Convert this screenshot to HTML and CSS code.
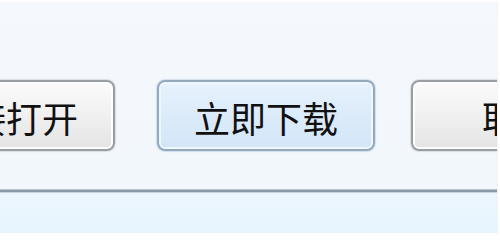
FILE: index.html
```html
<!DOCTYPE html>
<html lang="zh-CN">
<head>
<meta charset="utf-8">
<link rel="stylesheet" href="styles.css">
</head>
<body>
<div class="frame">
  <div class="main">
    <div class="buttons">
      <button class="btn btn-open">直接打开</button>
      <button class="btn btn-primary">立即下载</button>
      <button class="btn btn-cancel">取消</button>
    </div>
  </div>
  <div class="separator"></div>
  <div class="footer"></div>
</div>
</body>
</html>
```
FILE: styles.css
```css
html, body {
  margin: 0;
  padding: 0;
  width: 500px;
  height: 235px;
  overflow: hidden;
  background: #ffffff;
}
.frame {
  width: 497px;
  height: 233px;
  border-top: 2px solid #ffffff;
  border-right: 1px solid #f0f4f8;
  display: flex;
  flex-direction: column;
  background: #f3f8fd;
  overflow: hidden;
}
.main {
  height: 187px;
  background: linear-gradient(#f5f9fd, #f2f7fc);
}
.buttons {
  display: flex;
  column-gap: 36px;
  padding-top: 78px;
}
.btn {
  flex: none;
  width: 218px;
  height: 71px;
  box-sizing: border-box;
  border: 2px solid #9a9ea3;
  border-radius: 8px;
  box-shadow: inset 0 0 0 2px #fdfdfd, 0 0 1px 1px rgba(200, 206, 214, 0.6);
  background: linear-gradient(#fbfbfb 0%, #f1f1f1 45%, #e4e4e4 100%);
  font-family: "Noto Sans CJK SC", "Noto Sans", sans-serif;
  font-size: 36px;
  font-weight: 400;
  line-height: 1;
  color: #111111;
  padding: 3px 0 0 0;
  text-align: center;
}
.btn-open {
  margin-left: -103px;
}
.btn-primary {
  margin-left: 6px;
  border-color: #93a9bd;
  box-shadow: inset 0 0 0 2px #eef6fe, 0 0 1px 1px rgba(190, 206, 222, 0.6);
  background: linear-gradient(#e7f2fd 0%, #dcebfa 50%, #d2e6f8 100%);
}
.btn-cancel {
  text-align: left;
  padding-left: 69px;
}
.separator {
  height: 2px;
  background: #8898a9;
  border-top: 1px solid #b8c5d1;
  border-bottom: 1px solid #c8d4de;
}
.footer {
  flex: 1;
  background: linear-gradient(#ecf6fd, #e6f4fd);
  border-bottom: 2px solid #ffffff;
}
```
